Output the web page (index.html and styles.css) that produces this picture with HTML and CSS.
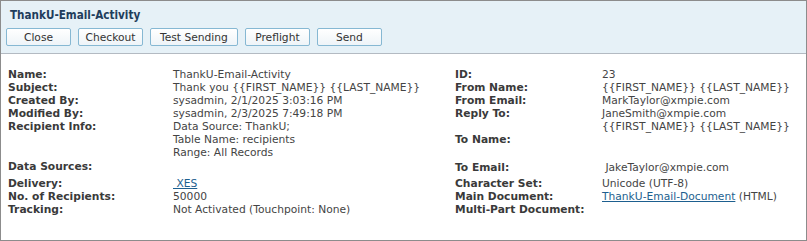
FILE: index.html
```html
<!DOCTYPE html>
<html lang="en">
<head>
  <meta charset="UTF-8">
  <title>ThankU-Email-Activity</title>
  <link rel="stylesheet" href="styles.css">
</head>
<body>
  <div class="panel">
    <div class="header">
      <div class="title">ThankU-Email-Activity</div>
      <div class="toolbar">
        <button class="button">Close</button>
        <button class="button">Checkout</button>
        <button class="button wide">Test Sending</button>
        <button class="button">Preflight</button>
        <button class="button">Send</button>
      </div>
    </div>

    <div class="details">
      <!-- Left column -->
      <div class="column left">
        <div class="row"><span class="label">Name:</span><span class="value">ThankU-Email-Activity</span></div>
        <div class="row"><span class="label">Subject:</span><span class="value">Thank you {{FIRST_NAME}} {{LAST_NAME}}</span></div>
        <div class="row"><span class="label">Created By:</span><span class="value">sysadmin, 2/1/2025 3:03:16 PM</span></div>
        <div class="row"><span class="label">Modified By:</span><span class="value">sysadmin, 2/3/2025 7:49:18 PM</span></div>
        <div class="row">
          <span class="label">Recipient Info:</span>
          <span class="value">Data Source: ThankU;<br>Table Name: recipients<br>Range: All Records</span>
        </div>
        <div class="row sources"><span class="label">Data Sources:</span><span class="value"></span></div>
        <div class="row delivery"><span class="label">Delivery:</span><span class="value"><a href="#" class="link">&nbsp;XES</a></span></div>
        <div class="row"><span class="label">No. of Recipients:</span><span class="value">50000</span></div>
        <div class="row"><span class="label">Tracking:</span><span class="value">Not Activated (Touchpoint: None)</span></div>
      </div>

      <!-- Right column -->
      <div class="column right">
        <div class="row"><span class="label">ID:</span><span class="value">23</span></div>
        <div class="row"><span class="label">From Name:</span><span class="value">{{FIRST_NAME}} {{LAST_NAME}}</span></div>
        <div class="row"><span class="label">From Email:</span><span class="value">MarkTaylor@xmpie.com</span></div>
        <div class="row">
          <span class="label">Reply To:</span>
          <span class="value">JaneSmith@xmpie.com<br>{{FIRST_NAME}} {{LAST_NAME}}</span>
        </div>
        <div class="row"><span class="label">To Name:</span><span class="value"></span></div>
        <div class="row email"><span class="label">To Email:</span><span class="value">&nbsp;JakeTaylor@xmpie.com</span></div>
        <div class="row charset"><span class="label">Character Set:</span><span class="value">Unicode (UTF-8)</span></div>
        <div class="row"><span class="label">Main Document:</span><span class="value"><a href="#" class="link">ThankU-Email-Document</a> (HTML)</span></div>
        <div class="row"><span class="label">Multi-Part Document:</span><span class="value"></span></div>
      </div>
    </div>
  </div>
</body>
</html>
```

FILE: styles.css
```css
body {
  margin: 0;
  font-family: "DejaVu Sans", Verdana, sans-serif;
  font-size: 10.7px;
  color: #333333;
  background-color: #ffffff;
}

.panel {
  width: 807px;
  height: 241px;
  box-sizing: border-box;
  border: 1px solid #8c8c8c;
}

.header {
  background-color: #e6f1f7;
  border-bottom: 1px solid #b3bac2;
  height: 53px;
  box-sizing: border-box;
  padding: 7px 5px 0 5px;
}

.title {
  font-family: "DejaVu Sans Condensed", "DejaVu Sans", sans-serif;
  font-weight: bold;
  font-size: 11.6px;
  color: #1f3d5c;
  padding-left: 4px;
  height: 20px;
}

.toolbar {
  display: flex;
  gap: 7px;
}

.button {
  font-family: inherit;
  font-size: 10.7px;
  color: #333333;
  height: 18px;
  min-width: 65px;
  padding: 0 6px;
  border: 1px solid #86b8d3;
  border-radius: 2px;
  background: linear-gradient(#ffffff, #eef4f8);
  cursor: pointer;
}

.button.wide {
  padding: 0 9px;
}

.details {
  display: flex;
  padding: 14px 0 0 7px;
}

.column {
  display: flex;
  flex-direction: column;
}

.column.left {
  width: 447px;
}

.row {
  display: flex;
  line-height: 13px;
}

.label {
  font-weight: bold;
  color: #3a3a3a;
}

.left .label {
  width: 165px;
}

.right .label {
  width: 147px;
}

.value {
  color: #444444;
}

.row.sources {
  margin-top: 1px;
}

.row.delivery {
  margin-top: 4px;
}

.row.email {
  margin-top: 15px;
}

.row.charset {
  margin-top: 3px;
}

.link {
  color: #1d5f8f;
  text-decoration: underline;
}
```
